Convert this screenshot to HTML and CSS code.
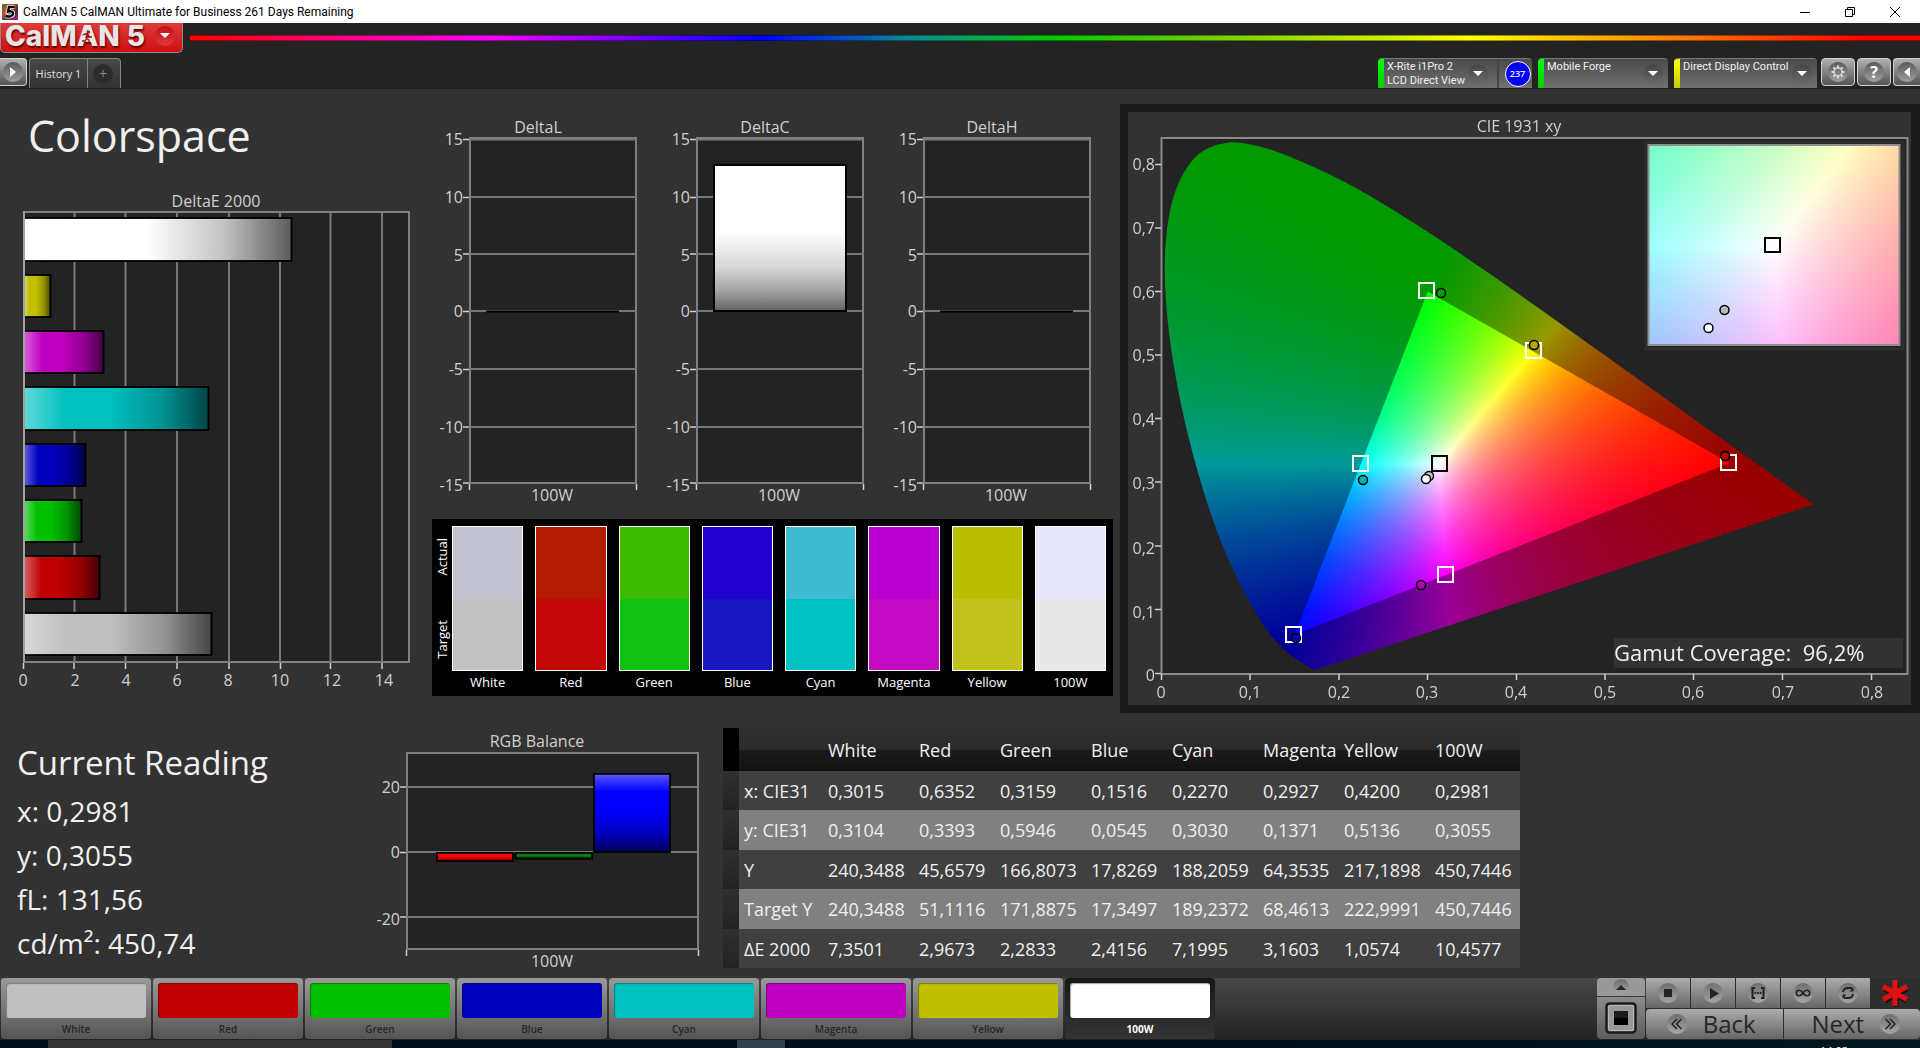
FILE: index.html
```html
<!DOCTYPE html>
<html lang="en">
<head>
<meta charset="utf-8">
<title>CalMAN 5 CalMAN Ultimate for Business</title>
<link rel="stylesheet" href="styles.css">
</head>
<body>
<div class="titlebar">
  <svg class="app-icon" width="16" height="16" viewBox="0 0 16 16" aria-hidden="true">
    <defs><linearGradient id="appGrad" x1="0" y1="0" x2="1" y2="1"><stop offset="0" stop-color="#2f7d2c"/><stop offset=".35" stop-color="#d9482b"/><stop offset=".65" stop-color="#3c2f3f"/><stop offset="1" stop-color="#b5207c"/></linearGradient></defs>
    <rect width="16" height="16" fill="url(#appGrad)"/>
    <path d="M12.500 3H7L6 7.500c3-.8 5.500 0 5 2.500-.5 2.500-4 3-7.500 2" fill="none" stroke="#fff" stroke-width="4"/>
    <path d="M12.500 3H7L6 7.500c3-.8 5.500 0 5 2.500-.5 2.500-4 3-7.500 2" fill="none" stroke="#000" stroke-width="2.400"/>
  </svg>
  <span class="window-title">CalMAN 5 CalMAN Ultimate for Business 261 Days Remaining</span>
  <div class="window-controls">
    <button class="win-btn" aria-label="Minimize"><svg width="10" height="10" viewBox="0 0 10 10"><path d="M0 5.500h10" stroke="#000"/></svg></button>
    <button class="win-btn" aria-label="Restore"><svg width="10" height="10" viewBox="0 0 10 10" fill="none" stroke="#000"><path d="M.5 2.500h7v7h-7zM2.500 2.500v-2h7v7h-2"/></svg></button>
    <button class="win-btn" aria-label="Close"><svg width="10" height="10" viewBox="0 0 10 10"><path d="M0 0l10 10M10 0L0 10" stroke="#000"/></svg></button>
  </div>
</div>

<header class="header">
  <div class="brand-row">
    <button class="logo" aria-label="CalMAN 5 menu">
      <span class="logo-text">CalM<span class="logo-a">A<svg class="runner" width="12" height="14" viewBox="0 0 12 14"><circle cx="7.500" cy="2" r="1.600" fill="#9c1313"/><path d="M1.500 5l3-1.200L7 5 5.500 8.500 8 10v3M5.500 8.500L4 11H1M7 5l1.500 2H11" fill="none" stroke="#9c1313" stroke-width="1.300"/></svg></span>N<span class="logo-five">5</span></span>
      <span class="logo-drop"><svg width="10" height="6" viewBox="0 0 10 6"><path d="M0 0h10L5 5z" fill="#fff"/></svg></span>
    </button>
    <div class="rainbow"></div>
  </div>
  <div class="tab-row">
    <button class="metal play-btn" aria-label="Expand"><span class="knob"><svg width="8" height="12" viewBox="0 0 8 12"><path d="M1 1l6 5-6 5z" fill="#fff"/></svg></span></button>
    <nav class="tabs"><button class="tab">History 1</button><button class="tab add" aria-label="Add tab"><span class="add-knob">+</span></button></nav>
    <div class="devices">
      <button class="device meter"><span class="led green"></span><span class="device-name">X-Rite i1Pro 2<br>LCD Direct View</span><span class="drop"><svg width="10" height="6" viewBox="0 0 10 6"><path d="M0 0h10L5 5z" fill="#fff"/></svg></span><span class="badge-cell"><span class="badge">237</span></span></button>
      <button class="device source"><span class="led green"></span><span class="device-name">Mobile Forge</span><span class="drop"><svg width="10" height="6" viewBox="0 0 10 6"><path d="M0 0h10L5 5z" fill="#fff"/></svg></span></button>
      <button class="device display"><span class="led yellow"></span><span class="device-name">Direct Display Control</span><span class="drop"><svg width="10" height="6" viewBox="0 0 10 6"><path d="M0 0h10L5 5z" fill="#fff"/></svg></span></button>
      <button class="metal tool" aria-label="Settings"><span class="knob"><svg width="14" height="14" viewBox="-7 -7 14 14" fill="none" stroke="#ddd"><circle r="4" stroke-width="1.500"/><path stroke-width="2" d="M0-4.500V-6.500M0 4.500V6.500M-4.500 0H-6.500M4.500 0H6.500M3.200-3.200L4.600-4.600M-3.200 3.200L-4.600 4.600M3.200 3.200L4.600 4.600M-3.200-3.200L-4.600-4.600"/></svg></span></button>
      <button class="metal tool" aria-label="Help"><span class="knob help">?</span></button>
      <button class="metal tool edge" aria-label="Collapse"><span class="knob"><svg width="8" height="12" viewBox="0 0 8 12"><path d="M7 1L1 6l6 5z" fill="#fff"/></svg></span></button>
    </div>
  </div>
</header>

<main class="workspace">
  <svg class="defs" width="0" height="0" aria-hidden="true">
    <defs>
      <linearGradient id="shadeH"><stop offset="0" stop-color="#fff" stop-opacity=".38"/><stop offset=".23" stop-color="#fff" stop-opacity="0"/><stop offset=".46" stop-color="#000" stop-opacity="0"/><stop offset=".75" stop-color="#000" stop-opacity=".24"/><stop offset="1" stop-color="#000" stop-opacity=".64"/></linearGradient>
      <linearGradient id="shadeV" x2="0" y2="1"><stop offset="0" stop-color="#fff" stop-opacity=".35"/><stop offset=".23" stop-color="#fff" stop-opacity="0"/><stop offset=".46" stop-color="#000" stop-opacity="0"/><stop offset=".75" stop-color="#000" stop-opacity=".24"/><stop offset="1" stop-color="#000" stop-opacity=".64"/></linearGradient>
    </defs>
  </svg>
  <div class="top">
    <section class="col-left">
      <h1>Colorspace</h1>
      <svg class="chart" viewBox="0 190 432 510" role="img" aria-label="DeltaE 2000">
        <rect class="plot" x="24" y="212" width="385" height="450"/>
        <path class="grid" d="M74.500 212V662M125.500 212V662M177 212V662M229 212V662M280 212V662M330.500 212V662M382 212V662"/>
        <g class="bars">
          <path fill="#fff" d="M24 218H291.500V261H24z"/><path fill="#c0c000" d="M24 275H50.500V317H24z"/><path fill="#c000c0" d="M24 331H103.500V373H24z"/><path fill="#00c0c0" d="M24 387H208.500V430H24z"/><path fill="#0000c0" d="M24 444H85.500V486H24z"/><path fill="#00c000" d="M24 500H81.500V542H24z"/><path fill="#c00000" d="M24 556H99.500V599H24z"/><path fill="#c0c0c0" d="M24 613H211.500V655H24z"/>
        </g>
        <g class="bars" fill="url(#shadeH)">
          <path d="M24 218H291.500V261H24z"/><path d="M24 275H50.500V317H24z"/><path d="M24 331H103.500V373H24z"/><path d="M24 387H208.500V430H24z"/><path d="M24 444H85.500V486H24z"/><path d="M24 500H81.500V542H24z"/><path d="M24 556H99.500V599H24z"/><path d="M24 613H211.500V655H24z"/>
        </g>
        <path class="axis" d="M24 211V662"/>
        <path class="tick" d="M23.500 663v6M74 663v6M125.500 663v6M177 663v6M229 663v6M280.500 663v6M330.500 663v6M382 663v6"/>
        <g class="label mid"><text x="216" y="207">DeltaE 2000</text><text x="23" y="686">0</text><text x="75" y="686">2</text><text x="126" y="686">4</text><text x="177" y="686">6</text><text x="228" y="686">8</text><text x="280" y="686">10</text><text x="332" y="686">12</text><text x="384" y="686">14</text></g>
      </svg>
    </section>

    <section class="col-mid">
      <div class="delta-row">
        <svg class="chart" viewBox="0 0 227 400" role="img" aria-label="DeltaL">
          <rect class="plot" x="38" y="25" width="166" height="345"/>
          <path class="grid" d="M38 26.500H204M38 84H204M38 141H204M38 198H204M38 256H204M38 314H204"/>
          <path d="M54 198.500H187" stroke="#000" stroke-width="2"/>
          <path class="tick" d="M31 26.500h6M31 84.500h6M31 141h6M31 198.500h6M31 256.500h6M31 314h6M31 370h6M37.500 371v6M204.500 371v6"/>
          <g class="label end"><text x="31" y="32">15</text><text x="31" y="90">10</text><text x="31" y="148">5</text><text x="31" y="204">0</text><text x="31" y="262">-5</text><text x="31" y="320">-10</text><text x="31" y="378">-15</text></g>
          <g class="label mid"><text x="106" y="20">DeltaL</text><text x="120" y="388">100W</text></g>
        </svg>
        <svg class="chart" viewBox="0 0 227 400" role="img" aria-label="DeltaC">
          <defs><linearGradient id="whiteBar" x2="0" y2="1"><stop offset=".45" stop-color="#fff"/><stop offset=".7" stop-color="#d6d6d6"/><stop offset=".87" stop-color="#a0a0a0"/><stop offset="1" stop-color="#606060"/></linearGradient></defs>
          <rect class="plot" x="38" y="25" width="166" height="345"/>
          <path class="grid" d="M38 26.500H204M38 84H204M38 141H204M38 198H204M38 256H204M38 314H204"/>
          <rect x="55" y="52" width="132" height="146" fill="url(#whiteBar)" stroke="#000" stroke-width="2"/>
          <path class="tick" d="M31 26.500h6M31 84.500h6M31 141h6M31 198.500h6M31 256.500h6M31 314h6M31 370h6M37.500 371v6M204.500 371v6"/>
          <g class="label end"><text x="31" y="32">15</text><text x="31" y="90">10</text><text x="31" y="148">5</text><text x="31" y="204">0</text><text x="31" y="262">-5</text><text x="31" y="320">-10</text><text x="31" y="378">-15</text></g>
          <g class="label mid"><text x="106" y="20">DeltaC</text><text x="120" y="388">100W</text></g>
        </svg>
        <svg class="chart" viewBox="0 0 227 400" role="img" aria-label="DeltaH">
          <rect class="plot" x="38" y="25" width="166" height="345"/>
          <path class="grid" d="M38 26.500H204M38 84H204M38 141H204M38 198H204M38 256H204M38 314H204"/>
          <path d="M54 198.500H187" stroke="#000" stroke-width="2"/>
          <path class="tick" d="M31 26.500h6M31 84.500h6M31 141h6M31 198.500h6M31 256.500h6M31 314h6M31 370h6M37.500 371v6M204.500 371v6"/>
          <g class="label end"><text x="31" y="32">15</text><text x="31" y="90">10</text><text x="31" y="148">5</text><text x="31" y="204">0</text><text x="31" y="262">-5</text><text x="31" y="320">-10</text><text x="31" y="378">-15</text></g>
          <g class="label mid"><text x="106" y="20">DeltaH</text><text x="120" y="388">100W</text></g>
        </svg>
      </div>
      <div class="compare">
        <div class="compare-side"><span>Actual</span><span>Target</span></div>
        <div class="pair"><div class="pair-box"><i class="a-white"></i><i class="t-white"></i></div>White</div>
        <div class="pair"><div class="pair-box"><i class="a-red"></i><i class="t-red"></i></div>Red</div>
        <div class="pair"><div class="pair-box"><i class="a-green"></i><i class="t-green"></i></div>Green</div>
        <div class="pair"><div class="pair-box"><i class="a-blue"></i><i class="t-blue"></i></div>Blue</div>
        <div class="pair"><div class="pair-box"><i class="a-cyan"></i><i class="t-cyan"></i></div>Cyan</div>
        <div class="pair"><div class="pair-box"><i class="a-magenta"></i><i class="t-magenta"></i></div>Magenta</div>
        <div class="pair"><div class="pair-box"><i class="a-yellow"></i><i class="t-yellow"></i></div>Yellow</div>
        <div class="pair"><div class="pair-box"><i class="a-100w"></i><i class="t-100w"></i></div>100W</div>
      </div>
    </section>

    <section class="cie">
      <canvas id="gamut" width="783" height="593"></canvas>
      <svg class="chart" viewBox="0 0 783 593" role="img" aria-label="CIE 1931 xy">
        <rect x="33.500" y="26" width="746" height="536" fill="none" stroke="#8a8a8a" stroke-width="2"/>
        <path class="tick" d="M27 52.500h6M27 116h6M27 179.500h6M27 243h6M27 306.500h6M27 370h6M27 434h6M27 497.500h6M27 561.500h6M33.500 562v6M122 562v6M211 562v6M299.500 562v6M388.500 562v6M477 562v6M565.500 562v6M654.500 562v6M743.500 562v6"/>
        <g class="label end"><text x="27" y="58">0,8</text><text x="27" y="122">0,7</text><text x="27" y="186">0,6</text><text x="27" y="249">0,5</text><text x="27" y="313">0,4</text><text x="27" y="377">0,3</text><text x="27" y="442">0,2</text><text x="27" y="506">0,1</text><text x="27" y="569">0</text></g>
        <g class="label mid"><text x="391" y="20">CIE 1931 xy</text><text x="33" y="586">0</text><text x="122" y="586">0,1</text><text x="211" y="586">0,2</text><text x="299" y="586">0,3</text><text x="388" y="586">0,4</text><text x="477" y="586">0,5</text><text x="565" y="586">0,6</text><text x="655" y="586">0,7</text><text x="744" y="586">0,8</text></g>
        <g fill="none" stroke="#fff" stroke-width="2">
          <rect x="291" y="171" width="15" height="15"/><rect x="398" y="231" width="15" height="15"/><rect x="593" y="343" width="15" height="15"/><rect x="225" y="344" width="15" height="15"/><rect x="310" y="455" width="15" height="15"/><rect x="158" y="515" width="15" height="15"/>
          <rect x="304" y="344" width="15" height="15" stroke="#000"/>
        </g>
        <g stroke="#000" stroke-width="1.500">
          <circle cx="313" cy="181" r="4.500" fill="#00a000"/><circle cx="406" cy="233" r="4.500" fill="#b4aa00"/><circle cx="597" cy="344" r="4.500" fill="#b40000"/><circle cx="235" cy="368" r="4.500" fill="#00b4a8"/><circle cx="293" cy="473" r="4.500" fill="#b400b4"/><circle cx="168" cy="526" r="4.500" fill="#0000b4"/><circle cx="301" cy="364" r="4.500" fill="#c0c0c0"/><circle cx="298" cy="367" r="4.500" fill="#fff"/>
        </g>
        <rect x="518" y="30" width="257" height="207" fill="none" stroke="#2e2e2e" stroke-width="3"/>
        <rect x="520.500" y="33" width="251" height="200" fill="none" stroke="#8f8f8f" stroke-width="2"/>
        <g stroke="#000" stroke-width="1.500"><rect x="637" y="126" width="15" height="14" fill="none" stroke-width="2"/><circle cx="596.500" cy="198" r="4.500" fill="#b8b8b8"/><circle cx="580.500" cy="216" r="4.500" fill="#fff"/></g>
        <rect x="486" y="526" width="289" height="30" fill="#323232"/>
        <text class="coverage" x="486" y="549" xml:space="preserve">Gamut Coverage:  96,2%</text>
      </svg>
    </section>
  </div>

  <div class="bottom">
    <section class="reading">
      <h2>Current Reading</h2>
      <p>x: 0,2981</p><p>y: 0,3055</p><p>fL: 131,56</p><p>cd/m²: 450,74</p>
    </section>
    <section class="balance">
      <svg class="chart" viewBox="370 728 340 245" role="img" aria-label="RGB Balance">
        <rect class="plot" x="407" y="753" width="291" height="196"/>
        <path class="grid" d="M407 787H698M407 852H698M407 917H698"/>
        <g class="bars"><path fill="#f00" d="M437 853H513V861H437z"/><path fill="#008000" d="M515.500 853H592V858.500H515.500z"/><path fill="#00f" d="M594 774H670V852H594z"/></g>
        <g class="bars" fill="url(#shadeV)"><path d="M437 853H513V861H437z"/><path d="M515.500 853H592V858.500H515.500z"/><path d="M594 774H670V852H594z"/></g>
        <path class="tick" d="M400 787h6M400 852.500h6M400 917h6M406.500 950v6M698.500 950v6"/>
        <g class="label end"><text x="400" y="793">20</text><text x="400" y="858">0</text><text x="400" y="925">-20</text></g>
        <g class="label mid"><text x="537" y="747">RGB Balance</text><text x="552" y="967">100W</text></g>
      </svg>
    </section>
    <section class="data">
      <table>
        <colgroup><col class="c-gut"><col class="c-name"><col class="c-w"><col class="c-n"><col class="c-w"><col class="c-n"><col class="c-w"><col class="c-n"><col class="c-w"><col class="c-last"></colgroup>
        <thead><tr><th class="gutter"></th><th></th><th>White</th><th>Red</th><th>Green</th><th>Blue</th><th>Cyan</th><th>Magenta</th><th>Yellow</th><th>100W</th></tr></thead>
        <tbody>
          <tr><td class="gutter"></td><th scope="row">x: CIE31</th><td>0,3015</td><td>0,6352</td><td>0,3159</td><td>0,1516</td><td>0,2270</td><td>0,2927</td><td>0,4200</td><td>0,2981</td></tr>
          <tr><td class="gutter"></td><th scope="row">y: CIE31</th><td>0,3104</td><td>0,3393</td><td>0,5946</td><td>0,0545</td><td>0,3030</td><td>0,1371</td><td>0,5136</td><td>0,3055</td></tr>
          <tr><td class="gutter"></td><th scope="row">Y</th><td>240,3488</td><td>45,6579</td><td>166,8073</td><td>17,8269</td><td>188,2059</td><td>64,3535</td><td>217,1898</td><td>450,7446</td></tr>
          <tr><td class="gutter"></td><th scope="row">Target Y</th><td>240,3488</td><td>51,1116</td><td>171,8875</td><td>17,3497</td><td>189,2372</td><td>68,4613</td><td>222,9991</td><td>450,7446</td></tr>
          <tr><td class="gutter"></td><th scope="row">ΔE 2000</th><td>7,3501</td><td>2,9673</td><td>2,2833</td><td>2,4156</td><td>7,1995</td><td>3,1603</td><td>1,0574</td><td>10,4577</td></tr>
        </tbody>
      </table>
    </section>
  </div>
</main>

<footer class="footer">
  <div class="patches">
    <button class="patch"><i class="s-white"></i>White</button><button class="patch"><i class="s-red"></i>Red</button><button class="patch"><i class="s-green"></i>Green</button><button class="patch"><i class="s-blue"></i>Blue</button><button class="patch"><i class="s-cyan"></i>Cyan</button><button class="patch"><i class="s-magenta"></i>Magenta</button><button class="patch"><i class="s-yellow"></i>Yellow</button><button class="patch active"><i class="s-100w"></i>100W</button>
  </div>
  <div class="window-size">
    <button class="grey up" aria-label="Expand"><span class="round small"><svg width="10" height="5" viewBox="0 0 10 5"><path d="M0 5h10L5 0z" fill="#222"/></svg></span></button>
    <button class="grey pattern" aria-label="Pattern window"><svg width="32" height="32" viewBox="0 0 32 32"><rect x="1.500" y="1.500" width="29" height="29" rx="3" fill="#999" stroke="#1c1c1c" stroke-width="2.500"/><rect x="3.500" y="3.500" width="25" height="25" rx="2" fill="none" stroke="#bbb"/><rect x="9" y="9" width="14" height="14" fill="#000"/><rect x="9" y="9" width="14" height="7" fill="#1c1c1c"/></svg></button>
  </div>
  <div class="transport">
    <div class="modes">
      <button class="grey" aria-label="Stop"><span class="round"><svg width="20" height="20" viewBox="0 0 20 20"><path d="M6 6h8v8H6z" fill="#222"/></svg></span></button>
      <button class="grey" aria-label="Play"><span class="round"><svg width="20" height="20" viewBox="0 0 20 20"><path d="M7 5l9 5.500L7 16z" fill="#222"/></svg></span></button>
      <button class="grey" aria-label="Read series"><span class="round"><svg width="20" height="20" viewBox="0 0 20 20" fill="none" stroke="#222" stroke-width="2"><path d="M7 5H4.500v10H7M13 5h2.500v10H13"/><path d="M6.500 10h7" stroke-dasharray="1.700 .9"/></svg></span></button>
      <button class="grey" aria-label="Read continuous"><span class="round"><svg width="20" height="20" viewBox="0 0 20 20" fill="none" stroke="#222" stroke-width="1.600"><path d="M10 10C8.500 7.500 7 7.300 6 7.300a2.700 2.700 0 000 5.400c1 0 2.500-.2 4-2.700s3-2.700 4-2.700a2.700 2.700 0 010 5.400c-1 0-2.500-.2-4-2.700z"/></svg></span></button>
      <button class="grey" aria-label="Refresh"><span class="round"><svg width="20" height="20" viewBox="0 0 20 20" fill="none" stroke="#222" stroke-width="2"><path d="M5 9c.5-3 3-4 5-4h4M15 11c-.5 3-3 4-5 4H6"/><path d="M15.500 4v4.500h-4zM4.500 16v-4.500h4z" fill="#222" stroke="none"/></svg></span></button>
      <span class="busy"><svg width="28" height="30" viewBox="-14 -15 28 30"><path d="M0-12V12M-11-6L11 6M11-6L-11 6" stroke="#111" stroke-width="5" transform="translate(1 2)"/><path d="M0-13V13M-12-6.500L12 6.500M12-6.500L-12 6.500" stroke="#e01010" stroke-width="5"/></svg></span>
    </div>
    <div class="nav">
      <button class="grey"><span class="round"><svg width="20" height="20" viewBox="0 0 20 20" fill="none" stroke="#222" stroke-width="1.500"><path d="M10 5l-5 5 5 5M14.500 5l-5 5 5 5"/></svg></span>Back</button>
      <button class="grey">Next<span class="round"><svg width="20" height="20" viewBox="0 0 20 20" fill="none" stroke="#222" stroke-width="1.500"><path d="M10 5l5 5-5 5M5.500 5l5 5-5 5"/></svg></span></button>
    </div>
  </div>
</footer>
<div class="taskbar"><span class="task wide"></span><span class="task"></span><span class="clock">14:03</span></div>
<script src="gamut.js"></script>
</body>
</html>
```

FILE: gamut.js
```js
// Paints the CIE 1931 xy chromaticity field behind the chart axes.
(function () {
  const canvas = document.getElementById('gamut');
  const ctx = canvas.getContext('2d');
  const X0 = 33.5, Y0 = 561, SX = 887.5, SY = 636;
  const px = x => X0 + x * SX;
  const py = y => Y0 - y * SY;

  // Linear RGB of a chromaticity, scaled so the largest channel is full.
  function colour(x, y) {
    y = Math.max(y, 0.0005);
    const X = x / y, Z = (1 - x - y) / y;
    const c = [
      3.2406 * X - 1.5372 - 0.4986 * Z,
      -0.9689 * X + 1.8758 + 0.0415 * Z,
      0.0557 * X - 0.2040 + 1.0570 * Z
    ].map(v => Math.max(v, 0));
    const m = Math.max(...c) || 1;
    return c.map(v => v / m * 255);
  }

  function field(w, h, toX, toY, gain) {
    const c = document.createElement('canvas');
    c.width = w; c.height = h;
    const g = c.getContext('2d');
    const img = g.createImageData(w, h);
    for (let j = 0, k = 0; j < h; j++) {
      for (let i = 0; i < w; i++, k += 4) {
        const rgb = colour(toX(i + 0.5), toY(j + 0.5));
        img.data[k] = rgb[0] * gain;
        img.data[k + 1] = rgb[1] * gain;
        img.data[k + 2] = rgb[2] * gain;
        img.data[k + 3] = 255;
      }
    }
    g.putImageData(img, 0, 0);
    return c;
  }

  const locus = [[.1741,.005],[.1714,.0051],[.1689,.0069],[.1644,.0109],[.1566,.0177],[.144,.0297],[.1241,.0578],[.1096,.0868],[.0913,.1327],[.0687,.2007],[.0454,.295],[.0235,.4127],[.0082,.5384],[.0039,.6548],[.0139,.7502],[.0389,.812],[.0743,.8338],[.1142,.8262],[.1547,.8059],[.1929,.7816],[.2296,.7543],[.3016,.6923],[.3731,.6245],[.4441,.5547],[.5125,.4866],[.5752,.4242],[.627,.3725],[.6658,.334],[.6915,.3083],[.719,.2809],[.7347,.2653]]
    .map(p => [px(p[0]), py(p[1])]);

  function tracePath(points, smooth) {
    const path = new Path2D();
    path.moveTo(points[0][0], points[0][1]);
    for (let i = 1; i < points.length; i++) {
      const a = points[i - 2] || points[i - 1], b = points[i - 1];
      const c = points[i], d = points[i + 1] || c;
      if (smooth) {
        path.bezierCurveTo(b[0] + (c[0] - a[0]) / 6, b[1] + (c[1] - a[1]) / 6,
          c[0] - (d[0] - b[0]) / 6, c[1] - (d[1] - b[1]) / 6, c[0], c[1]);
      } else {
        path.lineTo(c[0], c[1]);
      }
    }
    path.closePath();
    return path;
  }

  function paint(path, gain) {
    const src = field(783, 593, i => (i - X0) / SX, j => (Y0 - j) / SY, gain);
    ctx.save();
    ctx.clip(path);
    ctx.drawImage(src, 0, 0);
    ctx.restore();
  }

  ctx.fillStyle = '#232323';
  ctx.fillRect(33, 26, 746, 536);
  paint(tracePath(locus, true), 0.6);
  paint(tracePath([[.64, .33], [.3, .6], [.15, .06]].map(p => [px(p[0]), py(p[1])])), 1);

  // Magnified view around the white point.
  const W = 250, H = 200, R = 0.0292;
  ctx.drawImage(field(W, H, i => .3127 + (i / W * 2 - 1) * R, j => .329 - (j / H * 2 - 1) * R, 1), 521, 33);
})();
```

FILE: styles.css
```css
* { box-sizing: border-box; }
body {
  margin: 0;
  min-height: 100vh;
  display: flex;
  flex-direction: column;
  background: #232323;
  color: #f0f0f0;
  font-family: "Open Sans", "Noto Sans", sans-serif;
}
button {
  margin: 0;
  padding: 0;
  border: 0;
  font: inherit;
  color: inherit;
}
svg { display: block; }
h1, h2, p { margin: 0; font-weight: 400; }

/* Window title bar */
.titlebar {
  display: flex;
  align-items: center;
  height: 23px;
  padding: 0 3px 0 2px;
  gap: 5px;
  background: #fff;
  color: #000;
}
.window-title { font: 12px/20px Roboto, sans-serif; }
.window-controls { display: flex; margin-left: auto; }
.win-btn {
  display: grid;
  place-items: center;
  width: 45px;
  height: 20px;
  background: none;
}

/* Header */
.header { flex: none; background: #232323; }
.brand-row { display: flex; gap: 7px; height: 30px; }
.logo {
  display: flex;
  align-items: center;
  justify-content: space-between;
  width: 183px;
  height: 30px;
  padding: 0 7px 4px 4px;
  border: 1px solid #8c8c8c;
  border-top: 0;
  border-radius: 0 0 5px 5px;
  background: linear-gradient(#dd3c3c, #cf0f0f);
}
.logo-text {
  display: flex;
  color: #e6e6e6;
  font: 800 28px/26px Inter, sans-serif;
  text-shadow: 1px 2px 2px #600;
}
.logo-a { position: relative; }
.logo-five { padding-left: 7px; }
.runner { position: absolute; left: 4px; top: 7px; }
.logo-drop {
  display: grid;
  place-items: center;
  width: 20px;
  height: 20px;
  border-radius: 50%;
  background: linear-gradient(#c00f16, #e03a3a);
}
.rainbow {
  flex: 1;
  height: 6px;
  margin-top: 12px;
  border: solid rgba(0, 0, 0, .4);
  border-width: 1px 0;
  background: linear-gradient(90deg, #f00, #f0f 17%, #00f 33%, #0a9090 42%, #0c0 50%, #6c0 58%, #ff0 74%, #f80 85%, #f00 97%);
}
.tab-row { display: flex; align-items: flex-start; height: 36px; padding-top: 5px; }
.metal {
  display: grid;
  place-items: center;
  height: 28px;
  border: 1px solid #d0d0d0;
  border-radius: 4px;
  background: linear-gradient(#b0b0b0, #555);
}
.play-btn { width: 27px; border-left: 0; border-radius: 0 4px 4px 0; }
.knob {
  display: grid;
  place-items: center;
  width: 20px;
  height: 20px;
  border-radius: 50%;
  background: linear-gradient(#5a5a5a, #a0a0a0);
}
.help { color: #fff; font: 700 16px/20px "Open Sans", sans-serif; }
.tabs {
  display: flex;
  height: 30px;
  margin-left: 2px;
  border: 1px solid #858585;
  border-bottom: 0;
  border-radius: 4px 4px 0 0;
  background: linear-gradient(#484848, #323232);
}
.tab { width: 57px; background: none; color: #e0e0e0; font-size: 11px; }
.add { width: 33px; padding-right: 2px; border-left: 1px solid #858585; display: grid; place-items: center; }
.add-knob {
  width: 20px;
  height: 20px;
  border-radius: 50%;
  background: #2c2c2c;
  color: #8a8a8a;
  font-size: 14px;
  line-height: 20px;
}
.devices { display: flex; margin-left: auto; }
.device {
  display: flex;
  align-items: stretch;
  height: 30px;
  margin-right: 6px;
  overflow: hidden;
  border-top: 1px solid #777;
  border-radius: 4px 4px 0 0;
  background: linear-gradient(#4a4a4a, #707070);
  text-align: left;
}
.meter { width: 154px; }
.source { width: 130px; }
.display { width: 143px; margin-right: 4px; }
.led { width: 6px; }
.led.green { background: linear-gradient(#0f0, #0c0); }
.led.yellow { background: linear-gradient(#ff0, #cc0); }
.device-name { flex: 1; padding: 1px 0 0 3px; font: 11px/14px Roboto, sans-serif; white-space: nowrap; }
.drop {
  display: grid;
  place-items: center;
  align-self: center;
  width: 20px;
  height: 20px;
  margin-right: 5px;
  border-radius: 50%;
  background: linear-gradient(#444, #6a6a6a);
}
.meter .drop { margin-right: 9px; }
.badge-cell {
  display: grid;
  place-items: center;
  width: 35px;
  padding-left: 4px;
  border-left: 2px solid #454545;
}
.badge {
  width: 26px;
  height: 26px;
  border: 1px solid #fff;
  border-radius: 50%;
  background: #00f;
  font: 600 9px/24px "Open Sans", sans-serif;
  text-align: center;
}
.tool { width: 34px; margin-right: 2px; }
.edge { width: 27px; margin-right: 0; border-right: 0; border-radius: 4px 0 0 4px; }

/* Workspace */
.workspace { flex: 1; background: #323232; }
.defs { position: absolute; }
.top {
  display: grid;
  grid-template-columns: minmax(0, 432fr) minmax(0, 681fr) minmax(0, 807fr);
}
.bottom {
  display: grid;
  grid-template-columns: minmax(0, 370fr) minmax(0, 340fr) minmax(0, 1210fr);
}
.col-mid { padding-top: 24px; }
.cie {
  display: grid;
  align-self: start;
  margin: 15px 0 0 7px;
  border: 8px solid #1a1a1a;
  border-right-width: 9px;
}
.cie canvas, .cie .chart { grid-area: 1 / 1; width: 100%; }
h1 { height: 101px; padding: 17px 0 0 28px; font-size: 43px; line-height: 60px; }
.chart { width: 100%; overflow: visible; }
.plot { fill: #232323; stroke: #808080; stroke-width: 2; }
.grid { fill: none; stroke: #787878; stroke-width: 2; }
.axis { stroke: #a0a0a0; stroke-width: 2; }
.tick { stroke: #d0d0d0; stroke-width: 1.5; }
.bars { stroke: #000; stroke-width: 1.5; }
.label { fill: #d0d0d0; font-size: 16px; }
.mid { text-anchor: middle; }
.end { text-anchor: end; }
.coverage { fill: #f0f0f0; font-size: 22px; white-space: pre; }

.delta-row { display: flex; }
.delta-row .chart { flex: 1 1 0; min-width: 0; }
.compare {
  display: flex;
  gap: 12px;
  height: 177px;
  margin-top: 6px;
  padding: 7px 7px 0 0;
  background: #000;
  color: #fff;
  font-size: 13px;
  line-height: 22px;
}
.compare-side {
  display: flex;
  flex-direction: column;
  justify-content: space-between;
  width: 8px;
  height: 145px;
  padding: 12px 0;
}
.compare-side span {
  width: 20px;
  line-height: 20px;
  writing-mode: vertical-rl;
  transform: rotate(180deg);
}
.pair { flex: 1; text-align: center; }
.pair-box {
  display: flex;
  flex-direction: column;
  height: 145px;
  border: 1px solid #fff;
}
.pair-box i { flex: 1; }
.a-white { background: #c1c1cf; } .t-white { background: #c2c2c2; }
.a-red { background: #b21b00; } .t-red { background: #c20808; }
.a-green { background: #3cbc00; } .t-green { background: #12c212; }
.a-blue { background: #2200d0; } .t-blue { background: #1717c2; }
.a-cyan { background: #40bbd0; } .t-cyan { background: #00c2c4; }
.a-magenta { background: #b800d0; } .t-magenta { background: #c20ac4; }
.a-yellow { background: #bcbe00; } .t-yellow { background: #c2c21c; }
.a-100w { background: #e6e6ff; } .t-100w { background: #e8e8e8; }

.reading { padding: 26px 0 0 17px; font-size: 28px; line-height: 44px; }
.reading h2 { margin-bottom: 2px; font-size: 33px; line-height: 48px; }
.balance { padding-top: 15px; }
.data { padding: 15px 400px 0 13px; }
table {
  width: 100%;
  table-layout: fixed;
  border-collapse: collapse;
  font-size: 18px;
  line-height: 20px;
}
th, td { height: 39px; padding: 0 0 0 5px; font-weight: 400; text-align: left; white-space: nowrap; }
thead th {
  height: 43px;
  background: linear-gradient(#303030, #2a2a2a 50%, #1b1b1b 50%, #121212);
}
thead .gutter { background: #000; }
tbody tr { background: #404040; }
tbody tr:nth-child(even) { height: 40px; background: #808080; }
.gutter { background: linear-gradient(#303030, #222); }
.c-gut { width: 16px; }
.c-name { width: 84px; }
.c-w { width: 91px; }
.c-n { width: 81px; }
.c-last { width: 90px; }

/* Bottom bar */
.footer {
  display: flex;
  height: 62px;
  background: linear-gradient(#484848, #222);
}
.patches { display: flex; gap: 2px; flex: 1; padding: 0 0 1px 1px; }
.patch {
  display: flex;
  flex-direction: column;
  flex: 0 1 150px;
  padding: 5px 5px 0;
  border-radius: 4px;
  background: linear-gradient(#9a9a9a, #555);
  color: #262626;
  font-size: 10px;
  font-weight: 600;
  line-height: 20px;
}
.patch i {
  width: 100%;
  height: 36px;
  margin-bottom: 1px;
  border-radius: 3px;
  box-shadow: inset 1px 1px 1px rgba(0, 0, 0, .35);
}
.patch.active { background: linear-gradient(#181818, #343434); color: #fff; font-weight: 700; }
.s-white { background: #c0c0c0; }
.s-red { background: #c00000; }
.s-green { background: #00c000; }
.s-blue { background: #0000c0; }
.s-cyan { background: #00c0c0; }
.s-magenta { background: #c000c0; }
.s-yellow { background: #c0c000; }
.s-100w { background: #fff; }
.grey {
  display: flex;
  align-items: center;
  justify-content: center;
  background: linear-gradient(#ababab, #666);
  color: #262626;
}
.window-size { display: grid; grid-template-rows: 18px 42px; gap: 1px; width: 48px; margin-right: 1px; }
.up { border-radius: 4px 4px 0 0; background: #999; }
.pattern { border-radius: 0 0 4px 4px; background: linear-gradient(#8c8c8c, #5c5c5c); }
.round {
  display: grid;
  place-items: center;
  width: 20px;
  height: 20px;
  border-radius: 50%;
  background: linear-gradient(#6e6e6e, #a6a6a6);
}
.small { width: 16px; height: 16px; }
.transport { display: grid; grid-template-rows: 30px 30px; gap: 1px; width: 274px; background: #2c2c2c; }
.modes { display: grid; grid-template-columns: repeat(5, 44px) 1fr; gap: 1px; }
.busy { display: grid; place-items: center; padding-right: 2px; background: #2e2e2e; }
.nav { display: grid; grid-template-columns: 1fr 1fr; gap: 1px; }
.nav .grey { gap: 16px; padding-right: 6px; border-radius: 4px 0 0 4px; font-size: 24px; line-height: 28px; }
.nav .grey:last-child { padding: 0 0 0 8px; border-radius: 0 4px 4px 0; }

.taskbar { display: flex; height: 8px; overflow: hidden; background: linear-gradient(90deg, #000f1a 60%, #001820); }
.task { width: 48px; height: 8px; margin-left: 345px; background: #334050; }
.task.wide { width: 344px; margin-left: 48px; background: #333; }
.clock { margin: 4px 72px 0 auto; color: #fff; font: 11px/14px "Open Sans", sans-serif; }
```
